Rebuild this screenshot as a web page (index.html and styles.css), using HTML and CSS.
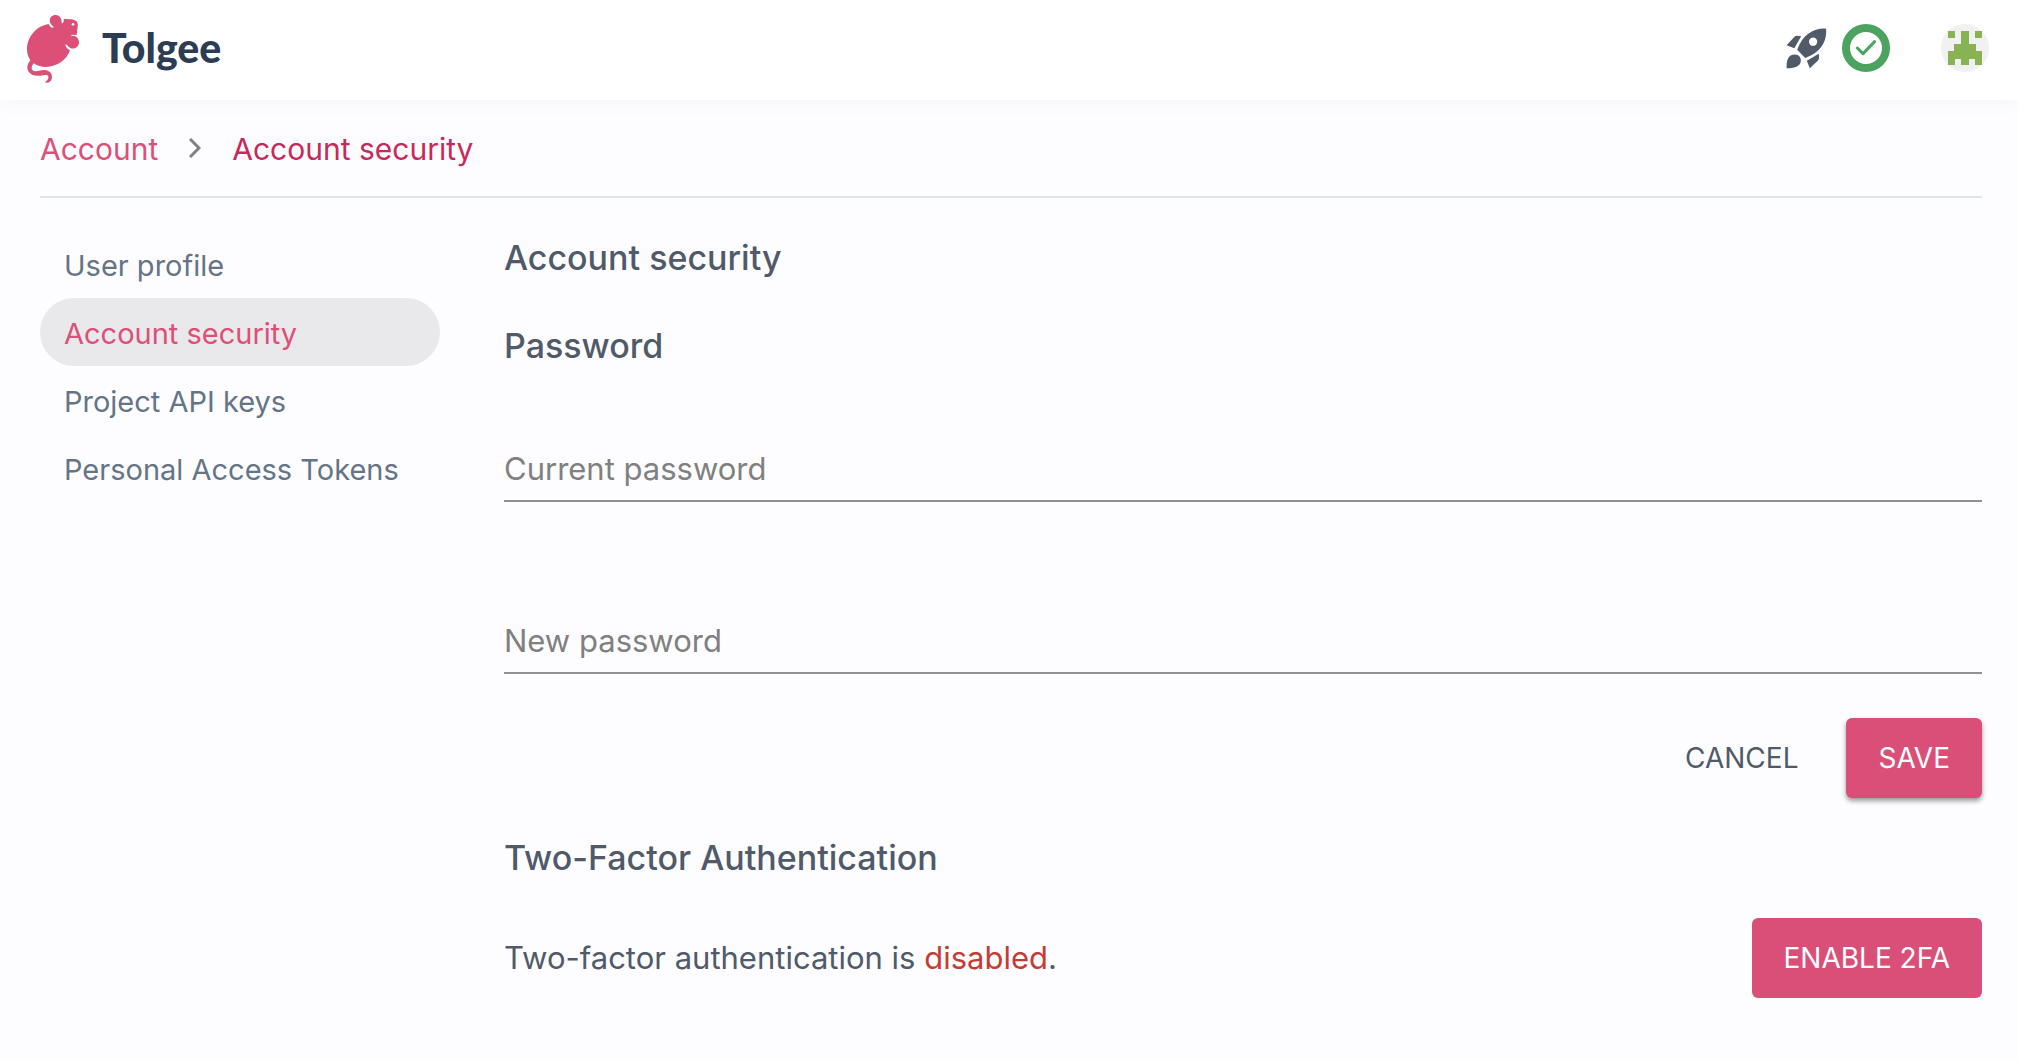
FILE: index.html
```html
<!DOCTYPE html>
<html lang="en">
<head>
<meta charset="utf-8">
<meta name="viewport" content="width=device-width, initial-scale=1">
<title>Tolgee – Account security</title>
<link rel="stylesheet" href="styles.css">
</head>
<body>
<header class="topbar">
  <a class="brand" href="#">
    <svg class="brand-mark" viewBox="78 39 162 210" aria-hidden="true">
      <path fill="#dc5078" d="M146 72C108 78 81 112 81 148C81 160 85 172 91 181C82 192 79 204 85 214C92 226 106 229 120 227C134 225 144 222 145 230C146 237 141 243 134 247C143 250 152 247 155 237C159 223 150 212 135 210C121 208 106 218 98 211C93 206 95 198 101 190C112 198 124 201 137 201C172 201 201 178 210 151C203 148 197 142 196 133C202 134 204 141 211 144C224 150 237 140 237 127C237 114 226 105 214 109L215 104L230 105L233 80C236 67 228 60 214 58L191 57C192 64 190 70 185 70C186 56 179 45 167 45C154 45 147 55 150 67C152 75 160 78 161 82C156 86 150 81 146 72Z"/>
      <circle cx="219" cy="73" r="4" fill="#fff"/>
    </svg>
    <span class="brand-name">Tolgee</span>
  </a>
  <div class="topbar-actions">
    <button class="icon-button" type="button" aria-label="What's new">
      <svg class="rocket" viewBox="76 82 124 124" aria-hidden="true" fill="#505a69">
        <path fill-rule="evenodd" d="M197 84C165 81 127 98 110 148L134 173C183 156 201 120 197 84ZM158 111a12.500 12.500 0 1 1 0 25a12.500 12.500 0 1 1 0-25Z"/>
        <path d="M122 107L101 143L78 134L101 109Q106 103 122 107ZM175 160L139 181L148 204L172 181Q178 176 175 160ZM78 204C77 180 82 162 103 162C116 162 121 172 121 181C120 200 99 203 78 204Z"/>
      </svg>
    </button>
    <button class="icon-button" type="button" aria-label="Setup complete">
      <svg class="status" viewBox="0 0 144 144" aria-hidden="true">
        <circle cx="72" cy="72" r="60" fill="#fff" stroke="#4ba35f" stroke-width="24"/>
        <path d="M46 72L63 89L98 53" fill="none" stroke="#4ba35f" stroke-width="9" stroke-linecap="round" stroke-linejoin="round"/>
      </svg>
    </button>
    <button class="icon-button avatar" type="button" aria-label="User menu">
      <svg viewBox="0 0 144 144" aria-hidden="true" shape-rendering="crispEdges">
        <path fill="#89b255" d="M21 21H42V42H21ZM102 21H123V42H102ZM60 21H84V60H105V81H123V123H102V105H84V123H60V105H42V123H21V81H39V60H60Z"/>
      </svg>
    </button>
  </div>
</header>
<div class="page">
  <nav class="breadcrumbs" aria-label="Breadcrumb">
    <a class="crumb" href="#">Account</a>
    <svg class="chevron" viewBox="0 0 12 20" aria-hidden="true"><path d="M1 1L10 10L1 19" fill="none" stroke="#808080" stroke-width="3"/></svg>
    <a class="crumb crumb-current" href="#" aria-current="page">Account security</a>
  </nav>
  <div class="layout">
    <nav class="menu" aria-label="Account">
      <a class="menu-item" href="#">User profile</a>
      <a class="menu-item menu-item-active" href="#">Account security</a>
      <a class="menu-item" href="#">Project API keys</a>
      <a class="menu-item" href="#">Personal Access Tokens</a>
    </nav>
    <main class="content">
      <h1 class="heading">Account security</h1>
      <h2 class="heading">Password</h2>
      <form class="password-form">
        <input class="field" type="password" placeholder="Current password" aria-label="Current password" autocomplete="current-password">
        <input class="field" type="password" placeholder="New password" aria-label="New password" autocomplete="new-password">
        <div class="form-actions">
          <button class="button button-text" type="button">CANCEL</button>
          <button class="button button-primary" type="submit">SAVE</button>
        </div>
      </form>
      <h2 class="heading">Two-Factor Authentication</h2>
      <div class="two-factor">
        <p class="two-factor-state">Two-factor authentication is <span class="disabled">disabled</span>.</p>
        <button class="button button-primary button-flat" type="button">ENABLE 2FA</button>
      </div>
    </main>
  </div>
</div>
</body>
</html>
```
FILE: styles.css
```css
* {
  box-sizing: border-box;
}

body {
  margin: 0;
  background: #fdfdff;
  color: #505a69;
  font-family: Inter, "Liberation Sans", sans-serif;
  font-size: 31px;
  line-height: 48px;
}

a {
  color: inherit;
  text-decoration: none;
}

button {
  font: inherit;
  color: inherit;
  border: 0;
  background: none;
  cursor: pointer;
}

.topbar {
  display: flex;
  align-items: center;
  justify-content: space-between;
  height: 100px;
  padding: 0 29px 4px 26px;
  background: #fff;
  box-shadow: 0 0 20px rgba(80, 80, 120, 0.06);
}

.brand {
  display: flex;
  align-items: center;
  gap: 22px;
}

.brand-mark {
  width: 54px;
  height: 70px;
}

.brand-name {
  color: #2c3c52;
  font-family: Lato, "Liberation Sans", sans-serif;
  font-size: 41px;
  font-weight: 900;
}

.topbar-actions {
  display: flex;
  align-items: center;
}

.icon-button {
  display: flex;
  padding: 0;
}

.icon-button svg {
  width: 48px;
  height: 48px;
}

.icon-button .rocket {
  width: 41px;
  height: 41px;
  margin-right: 15px;
}

.avatar {
  margin-left: 51px;
  border-radius: 50%;
  background: #f1f1f1;
}

.page {
  padding: 0 36px 60px 40px;
}

.breadcrumbs {
  display: flex;
  align-items: center;
  height: 98px;
  border-bottom: 2px solid #dfe3ea;
  font-size: 30px;
}

.chevron {
  width: 12px;
  height: 20px;
  margin: 0 31px;
}

.crumb {
  padding-top: 2px;
  color: #dc5078;
}

.crumb-current {
  color: #c8295a;
}

.layout {
  display: grid;
  grid-template-columns: 400px minmax(0, 1fr);
  gap: 64px;
  padding-top: 32px;
}

.menu-item {
  display: block;
  padding: 12px 24px 8px;
  border-radius: 34px;
  color: #667487;
  font-size: 29px;
}

.menu-item-active {
  background: #e9e9eb;
  color: #dc5078;
}

.heading {
  margin: 0;
  font-size: 34px;
  font-weight: 500;
}

.content {
  padding-top: 4px;
}

.content > .heading + .heading {
  margin-top: 40px;
}

.password-form {
  margin: 66px 0 36px;
}

.field {
  display: block;
  width: 100%;
  height: 66px;
  padding: 0;
  border: 0;
  border-bottom: 2px solid #919193;
  border-radius: 0;
  background: none;
  color: inherit;
  font: inherit;
}

.field + .field {
  margin-top: 106px;
}

.field::placeholder {
  color: #808080;
  opacity: 1;
}

.form-actions {
  display: flex;
  justify-content: flex-end;
  gap: 16px;
  margin-top: 44px;
}

.button {
  height: 80px;
  padding: 0 32px;
  border-radius: 6px;
  font-size: 28px;
}

.button-primary {
  background: #da4f78;
  color: #fff;
  box-shadow: 0 3px 5px rgba(0, 0, 0, 0.4);
}

.two-factor {
  display: flex;
  align-items: center;
  justify-content: space-between;
  margin-top: 36px;
}

.two-factor-state {
  margin: 0;
}

.button-flat {
  box-shadow: none;
}

.disabled {
  color: #c43c35;
}
```
